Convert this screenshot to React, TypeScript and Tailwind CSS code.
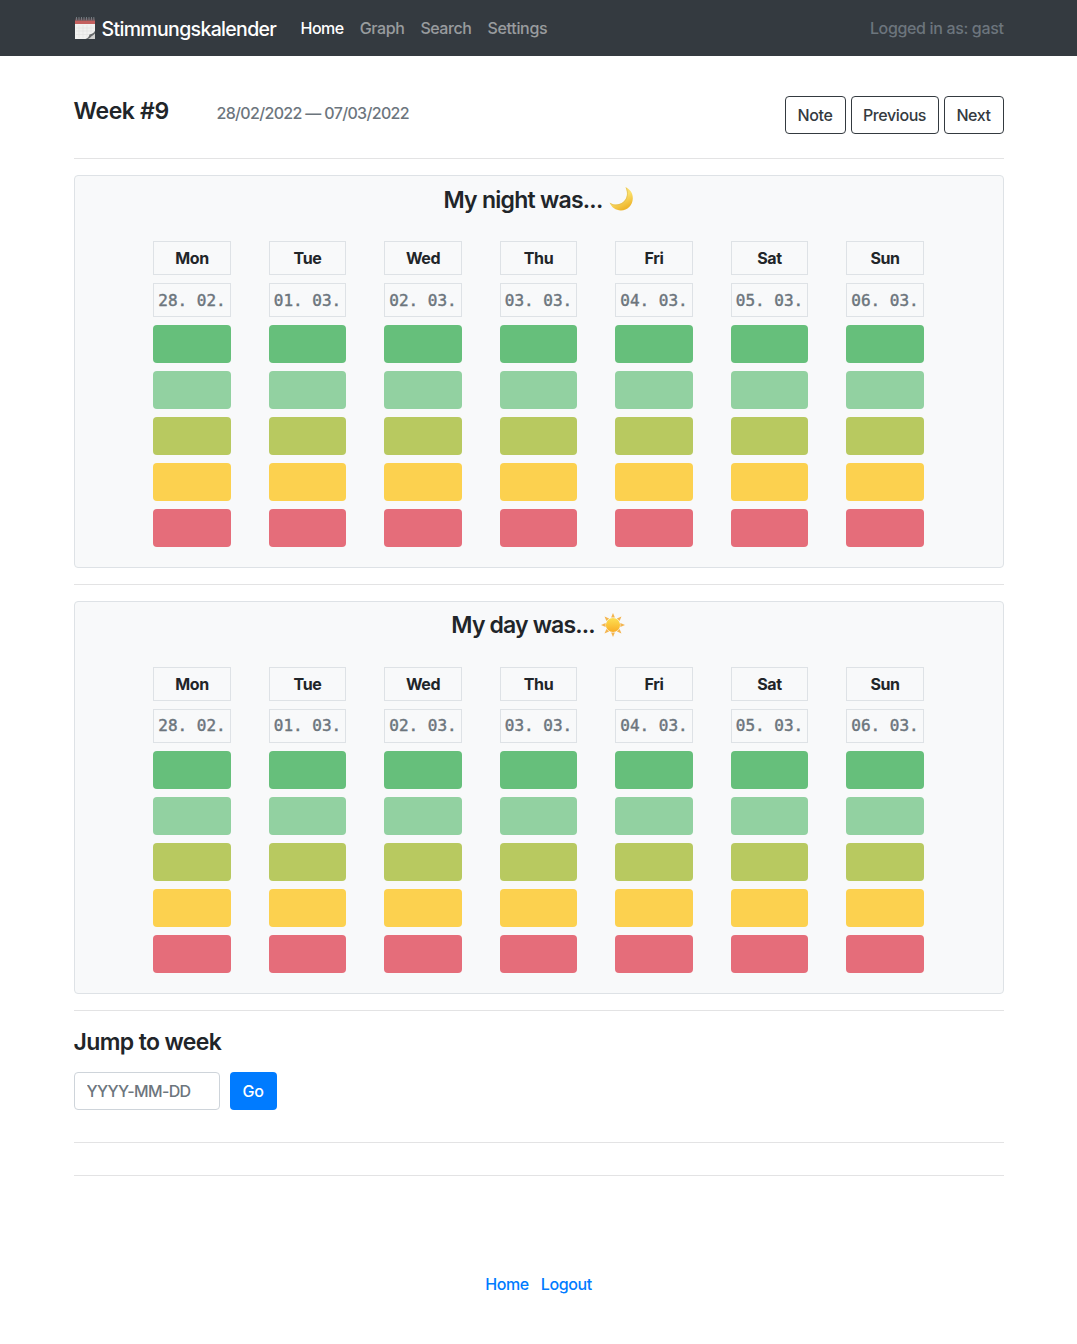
const days = [
  ["Mon", "28. 02."],
  ["Tue", "01. 03."],
  ["Wed", "02. 03."],
  ["Thu", "03. 03."],
  ["Fri", "04. 03."],
  ["Sat", "05. 03."],
  ["Sun", "06. 03."],
];

const moods = ["bg-[#66bf7b]", "bg-[#92d1a1]", "bg-[#b8c960]", "bg-[#fcd14f]", "bg-[#e56d7a]"];

function CalendarIcon() {
  return (
    <svg width="22" height="24" viewBox="0 0 22 24" className="shrink-0">
      <path d="M1 5H21V23H1Z" fill="#f1f1f0" />
      <path d="M1 4H21V8H1Z" fill="#c4605f" />
      <path d="M1 2.5H21V4.5H1Z" fill="#5c4a50" />
      <path d="M2.500 1V4.5M5 1V4.5M7.500 1V4.5M10 1V4.5M12.500 1V4.5M15 1V4.5M17.500 1V4.5M19.800 1V4.5" stroke="#73797e" strokeWidth="1" />
      <path d="M5 9V22M9 9V22M13 9V21M17 9V17M2 12H20M2 15H20M2 18.500H16" stroke="#e0e0df" strokeWidth=".6" />
      <path d="M12 23C15 22 16 21 16.500 19C18 18.500 20 17.500 21 16V23Z" fill="#d0d0cf" />
      <path d="M11.500 23C14 22 15 20.500 15.500 18.500C18 18.200 20 17 21 14.800V17.500C19.500 19 18.500 19.800 17.500 20.200C16.500 21.700 15 22.700 13.500 23Z" fill="#66696b" />
    </svg>
  );
}

function MoonIcon() {
  return (
    <svg width="26" height="26" viewBox="0 0 26 26">
      <defs>
        <linearGradient id="moon" x1="0" y1="0" x2="0.5" y2="1">
          <stop offset="0" stopColor="#f3d76b" />
          <stop offset=".55" stopColor="#fbe06a" />
          <stop offset="1" stopColor="#eeb52c" />
        </linearGradient>
      </defs>
      <path d="M17.300 1C22 3 25 7.300 24.800 12.500C24.600 19.300 19.500 24.300 13 24.400C8 24.500 3.500 21.500 1.500 16.500C5 19.200 11 19.500 15.300 15.800C19.500 12.100 20 6 17.300 1Z" fill="url(#moon)" />
      <path d="M2.200 17.300C6 20 12 19.700 16 16C19.800 12.500 20.500 7 18.300 2" fill="none" stroke="#dcb957" strokeWidth=".6" />
    </svg>
  );
}

function SunIcon() {
  return (
    <svg width="26" height="26" viewBox="0 0 26 26">
      <defs>
        <linearGradient id="sun" x1="0" y1="0" x2="0" y2="1">
          <stop offset="0" stopColor="#fde052" />
          <stop offset="1" stopColor="#f9ad26" />
        </linearGradient>
      </defs>
      {[0, 45, 90, 135, 180, 225, 270, 315].map((a) => (
        <path key={a} d="M13 1L14.900 5.600H11.100Z" fill="#f3b550" transform={`rotate(${a} 13 13)`} />
      ))}
      <circle cx="13" cy="13" r="7.100" fill="url(#sun)" />
    </svg>
  );
}

type CardProps = { title: string; titleClass: string; dateClass: string; icon: React.ReactNode };

function MoodCard({ title, titleClass, dateClass, icon }: CardProps) {
  return (
    <section className="h-[393px] rounded border border-[#dee2e6] bg-[#f8f9fa]">
      <h4 className="mt-2 flex h-[29px] items-center justify-center gap-[5px] text-[23px] font-[570]">
        <span className={`whitespace-nowrap ${titleClass}`}>{title}</span>
        {icon}
      </h4>
      <div className="mt-7 flex justify-center gap-[38px]">
        {days.map(([day, date]) => (
          <div key={day} className="flex w-[77.5px] flex-col gap-2">
            <div className="flex h-[34px] items-center justify-center border border-[#dee2e6] font-bold tracking-[-0.4px]">{day}</div>
            <div className={`flex h-[34px] items-center justify-center whitespace-nowrap border border-[#dee2e6] font-['DejaVu_Sans_Mono',monospace] tracking-normal text-[#6c757d] [-webkit-text-stroke:0.45px_#6c757d] ${dateClass}`}>{date}</div>
            {moods.map((mood) => (
              <button key={mood} className={`h-[38px] rounded ${mood}`} aria-label={`${day} mood`} />
            ))}
          </div>
        ))}
      </div>
    </section>
  );
}

function Rule() {
  return <hr className="border-[#e3e3e4]" />;
}

export default function App() {
  return (
    <div className="h-[1344px] bg-white font-[Inter,sans-serif] text-base font-[450] tracking-[-0.4px] text-[#212529]">
      <nav className="h-14 bg-[#343a40]">
        <div className="mx-auto flex h-full w-[930px] items-center whitespace-nowrap">
          <a className="mr-6 flex w-[203px] items-center gap-1.5 text-[19.5px] font-[480] tracking-[-0.66px] text-white">
            <CalendarIcon />
            <span className="pt-[3px]">Stimmungskalender</span>
          </a>
          <div className="flex gap-4 text-white/50">
            <a className="font-medium tracking-[-0.5px] text-white">Home</a>
            <a>Graph</a>
            <a className="tracking-[-0.45px]">Search</a>
            <a className="tracking-[-0.3px]">Settings</a>
          </div>
          <span className="ml-auto tracking-[-0.35px] text-[#6c757d]">Logged in as: gast</span>
        </div>
      </nav>
      <main className="mx-auto w-[930px] pt-10">
        <header className="flex h-[38px] items-start whitespace-nowrap">
          <h4 className="w-[143px] text-[23px] leading-[30px] font-[570] tracking-[-0.38px]">Week #9</h4>
          <span className="mt-[5px] tracking-[-0.66px] text-[#6c757d]">28/02/2022 — 07/03/2022</span>
          <div className="ml-auto flex gap-[5px] text-[#343a40]">
            <button className="h-[38px] w-[61px] rounded border border-[#343a40]">Note</button>
            <button className="h-[38px] w-[88px] rounded border border-[#343a40]">Previous</button>
            <button className="h-[38px] w-[60px] rounded border border-[#343a40]">Next</button>
          </div>
        </header>
        <div className="mt-6 flex flex-col gap-4">
          <Rule />
          <MoodCard title="My night was..." titleClass="pt-[3px] tracking-[-0.75px]" dateClass="pt-0.5" icon={<MoonIcon />} />
          <Rule />
          <MoodCard title="My day was..." titleClass="pt-0.5 tracking-[-0.85px]" dateClass="" icon={<SunIcon />} />
          <Rule />
        </div>
        <h4 className="mt-4 text-[23px] leading-[31px] font-[570] tracking-[-0.62px]">Jump to week</h4>
        <form className="mt-3.5 flex gap-2.5">
          <input placeholder="YYYY-MM-DD" className="h-[38px] w-[146px] rounded border border-[#ced4da] px-3 tracking-[-0.65px] placeholder:text-[#6c757d]" />
          <button type="button" className="h-[38px] w-[47px] rounded bg-[#007bff] text-white">Go</button>
        </form>
        <div className="mt-8 flex flex-col gap-8">
          <Rule />
          <Rule />
        </div>
        <footer className="mt-24 flex justify-center gap-3 text-[#007bff]">
          <a>Home</a>
          <a>Logout</a>
        </footer>
      </main>
    </div>
  );
}
